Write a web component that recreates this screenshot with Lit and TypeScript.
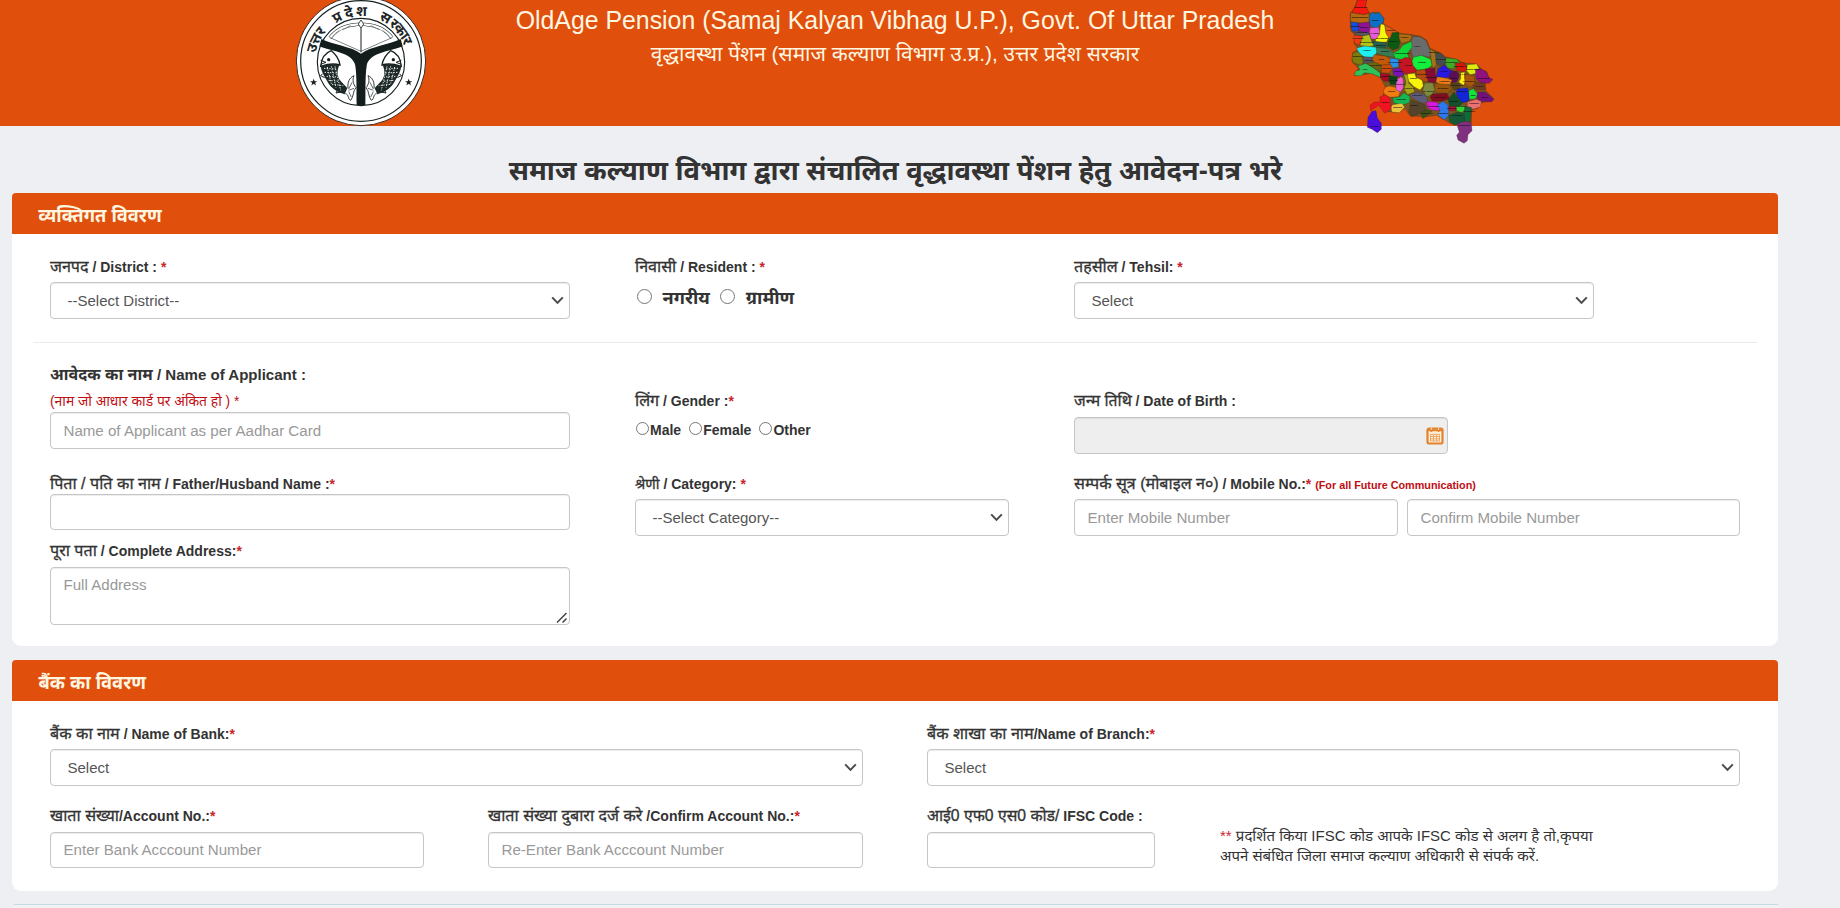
import { LitElement, html, svg, css, nothing } from "lit";
import { customElement, property } from "lit/decorators.js";

/* fill, outline points, optional name with its centre */
type District = [string, string, string?, number?, number?];

const DISTRICTS: District[] = [
  ["#f5190f", "82,0 110,0 106,18 118,38 102,44 66,38 68,30 78,18", "Saharanpur", 92, 25],
  ["#b8690f", "62,38 102,44 117,40 117,66 100,70 62,66", "Muzaffarnagar", 90, 53],
  ["#0f6fc4", "118,46 128,36 136,42 146,36 162,55 158,70 148,76 138,86 122,78 118,62", "Bijnor", 137, 62],
  ["#1450dc", "62,66 84,68 88,94 66,94", "Baghpat", 74, 80],
  ["#8c1494", "84,70 118,66 120,84 116,100 88,98", "Meerut", 101, 84],
  ["#e85bd8", "120,84 146,82 150,98 142,118 124,116 118,100", "J P Nagar", 133, 101],
  ["#f6f50c", "152,72 164,74 168,98 176,112 170,126 140,128 136,120 148,104", "Moradabad", 157, 116],
  ["#e05c10", "164,74 186,86 206,98 190,104 178,116 168,100", "Rampur", 182, 93],
  ["#5c5560", "72,92 116,98 120,108 98,108 76,106", "Ghaziabad", 94, 98],
  ["#f03c10", "72,106 98,108 92,134 76,132 72,120", "G B Nagar", 84, 118],
  ["#b4c414", "98,108 118,104 124,122 134,136 116,140 90,136", "Bulandshahr", 110, 129],
  ["#24604a", "126,122 168,128 176,140 150,146 132,140", "Sambhal", 152, 137],
  ["#0c5a14", "186,98 206,96 210,122 206,144 188,150 174,138 174,124 182,112", "Bareilly", 191, 127],
  ["#b06c10", "206,102 240,104 246,112 238,124 214,130 208,116", "Pilibhit", 223, 114],
  ["#6a6c6c", "248,110 270,110 288,122 298,146 306,162 296,172 272,166 250,174 244,156 240,134", "Kheri", 262, 142],
  ["#10d838", "244,124 246,142 232,160 236,172 222,180 194,174 188,160 208,150 218,136", "Shahjahanpur", 218, 162],
  ["#3c7c54", "134,142 176,146 190,158 194,172 166,168 140,160", "Budaun", 166, 157],
  ["#1ef0f0", "80,144 104,138 138,142 140,158 130,172 106,172 92,164 84,154", "Aligarh", 110, 152],
  ["#7c7c0c", "68,160 84,154 96,168 100,186 92,196 70,188 66,176", "Mathura", 82, 171],
  ["#545464", "98,170 130,172 134,180 124,192 102,190", "Hathras", 116, 184],
  ["#c25a08", "132,164 166,168 184,178 180,192 156,196 136,190 126,180", "Etah", 154, 180],
  ["#2cc45a", "84,198 108,190 134,206 152,220 150,232 128,222 104,218 92,228 72,226 78,212 90,210", "Agra", 104, 209],
  ["#6c6410", "108,190 134,186 154,196 152,218 136,206", "Firozabad", 136, 198],
  ["#c84e0c", "154,196 182,192 190,204 176,220 154,218", "Mainpuri", 171, 208],
  ["#2890e8", "180,174 206,178 206,200 188,204 180,190", "Farrukhabad", 194, 188],
  ["#c61422", "206,182 226,172 242,176 252,196 258,216 232,222 210,214 208,196", "Hardoi", 234, 197],
  ["#14ee3c", "250,172 274,166 302,178 306,196 290,208 262,210 250,198 246,184", "Sitapur", 276, 188],
  ["#a4721c", "300,146 316,158 322,172 318,196 308,206 304,182", "Bahraich", 312, 160],
  ["#444c4c", "316,160 334,160 346,174 350,190 330,198 318,188", "Shravasti", 333, 179],
  ["#3cae24", "348,174 382,178 388,190 370,206 352,204 346,190", "Balrampur", 365, 189],
  ["#a80c24", "150,220 178,222 184,244 162,244 152,234", "Etawah", 165, 232],
  ["#0c4418", "178,226 202,230 200,252 182,254 176,242", "Auraiya", 190, 242],
  ["#7a14b8", "188,206 210,204 222,224 208,232 190,224", "Kannauj", 205, 217],
  ["#a8a414", "222,222 234,226 236,250 250,262 254,276 232,284 222,266 228,248", "Kanpur N", 238, 266],
  ["#f8f40c", "232,222 254,220 258,232 276,238 280,258 270,270 252,260 236,244", "Unnao", 250, 238],
  ["#b44a10", "258,212 286,208 290,222 300,240 286,246 260,232", "Lucknow", 274, 224],
  ["#840c34", "286,206 314,204 318,236 316,250 296,246 288,224", "Barabanki", 303, 233],
  ["#2a18e0", "324,206 344,194 354,206 366,212 366,228 346,234 318,232", "Gonda", 342, 216],
  ["#d6180c", "374,190 402,188 412,204 404,216 382,212", "Siddharth N", 390, 202],
  ["#dcec0c", "412,194 440,192 448,206 440,220 420,224 410,212", "Maharajganj", 430, 211],
  ["#5c1054", "364,212 382,214 388,228 380,246 362,248 356,232", "Basti", 372, 236],
  ["#fcf00c", "392,218 404,216 404,236 412,240 400,256 386,246 392,236", "S K N", 398, 226],
  ["#a8540c", "404,222 432,228 436,250 420,262 404,252", "Gorakhpur", 416, 245],
  ["#90107c", "436,208 452,206 470,216 476,232 488,238 478,250 452,248 438,236", "Kushinagar", 460, 236],
  ["#703c20", "436,246 464,250 466,268 444,270 428,264", "Deoria", 448, 261],
  ["#f07c18", "322,230 346,234 366,240 360,254 330,256 318,244", "Faizabad", 343, 247],
  ["#98560c", "316,250 360,254 366,268 352,280 322,278 312,266", "Sultanpur", 339, 268],
  ["#544418", "362,248 388,250 390,268 372,270", "Ambedkar N", 379, 258],
  ["#7c8c3c", "284,250 308,248 314,268 306,284 290,290 278,272", "Rae Bareli", 293, 277],
  ["#5c5c78", "238,284 262,276 288,286 294,306 276,310 250,296", "Fatehpur", 262, 289],
  ["#820c20", "306,282 350,280 360,296 334,304 308,304 300,292", "Pratapgarh", 328, 294],
  ["#1424d8", "382,266 412,264 420,282 416,304 398,308 384,294 378,280", "Azamgarh", 396, 275],
  ["#12e43c", "416,272 430,266 444,284 436,296 418,298", "Mau", 430, 288],
  ["#74107c", "444,276 466,276 492,298 484,306 450,304 440,292", "Ballia", 464, 295],
  ["#ec7070", "412,306 438,298 454,304 452,320 430,328 412,318", "Ghazipur", 432, 313],
  ["#12502c", "354,300 372,276 384,294 398,308 386,320 360,322", "Jaunpur", 372, 306],
  ["#d818dc", "290,304 318,306 332,314 328,332 304,330 292,322", "Kaushambi", 310, 322],
  ["#2c78ec", "322,316 338,304 354,314 356,346 344,360 324,346 330,330", "Allahabad", 338, 341],
  ["#54442c", "244,300 268,308 286,314 288,330 270,340 246,350 236,336 240,316", "Banda", 252, 318],
  ["#3c5018", "272,338 290,328 306,334 290,348 278,356", "Chitrakoot", 290, 342],
  ["#a8143c", "356,320 376,318 378,332 358,332", "Bhadohi", 366, 327],
  ["#34d034", "378,320 402,316 408,328 394,338 380,332", "Varanasi", 394, 321],
  ["#0c6c3c", "404,322 424,322 420,366 404,364 402,340", "Chandauli", 418, 336],
  ["#145838", "356,346 384,336 402,340 404,368 372,376 358,364", "Mirzapur", 382, 349],
  ["#f07c10", "166,262 178,258 196,262 210,276 206,290 180,292 164,284 160,274", "Jalaun", 184, 275],
  ["#ec60d4", "202,238 212,230 220,236 220,264 212,276 198,270 198,252", "Kanpur D", 210, 256],
  ["#12b854", "188,294 210,290 222,278 240,290 238,308 214,316 192,308", "Hamirpur", 213, 300],
  ["#ecc43c", "188,314 216,310 224,322 208,338 186,336 182,322", "Mahoba", 203, 324],
  ["#f01420", "166,284 180,294 184,326 164,340 146,316 122,332 120,316 132,306 150,306 150,290", "Jhansi", 165, 308],
  ["#4c0cdc", "126,334 138,332 142,354 154,370 154,388 142,398 126,388 112,382 114,352", "Lalitpur", 134, 380],
  ["#803080", "380,372 404,364 424,368 426,392 414,404 412,422 402,430 384,420 380,406 388,396", "Sonbhadra", 402, 378],
];

@customElement("up-map")
export class UpMap extends LitElement {
  static styles = css`
    :host { display: block; width: 180px; height: 150px; }
    svg { display: block; width: 180px; height: 150px; }
    polygon { stroke: #2b2414; stroke-width: 1.2; stroke-linejoin: round; stroke-opacity: 0.65; }
    .base { fill: #7a5420; }
    text { font: 700 7px "Liberation Sans", sans-serif; fill: #0c0c10; text-anchor: middle; }
  `;
  render() {
    return html`<svg viewBox="0 0 540 450" role="img" aria-label="Uttar Pradesh districts">
      <polygon class="base" points="82,0 110,0 106,18 118,40 135,36 148,38 162,55 160,72 185,85 205,100 240,103 270,108 290,120 300,145 330,158 345,170 380,178 400,188 440,192 455,208 470,215 478,235 488,240 465,252 468,272 492,297 470,305 450,310 445,325 425,330 424,366 395,372 360,370 320,346 290,350 240,348 225,325 205,338 185,335 165,335 155,310 160,285 166,260 155,240 150,232 125,220 90,226 72,225 85,205 66,185 68,158 85,148 72,130 75,105 62,92 60,40 70,30"/>
      ${DISTRICTS.map(([fill, pts]) => svg`<polygon points=${pts} fill=${fill}></polygon>`)}
      ${DISTRICTS.map(([, , name, x, y]) => name ? svg`<text x=${x} y=${y}>${name}</text>` : nothing)}
    </svg>`;
  }
}

/* syllable and its angle round the ring, in degrees from the top */
const RING: [string, number][] = [
  ["उ", -78], ["त्त", -67], ["र", -56.5],
  ["प्र", -32], ["दे", -18], ["श", -3.5],
  ["स", 25], ["र", 36.5], ["का", 49], ["र", 61.5],
];

@customElement("state-emblem")
export class StateEmblem extends LitElement {
  static styles = css`
    :host { display: block; width: 132px; height: 132px; }
    svg { display: block; width: 132px; height: 132px; }
    .arc { font: 700 43px "Noto Sans Devanagari", "Noto Sans", sans-serif; fill: #1c2626; text-anchor: middle; }
  `;
  private fish() {
    return svg`
      <path d="M122,198 C124,176 134,158 154,151 C166,160 178,178 180,194 C168,190 146,190 122,198Z" fill="#fff" stroke="#16201f" stroke-width="4"/>
      <path d="M122,180 L138,186 L122,192" fill="none" stroke="#16201f" stroke-width="3"/>
      <circle cx="146" cy="178" r="5" fill="#16201f"/>
      <path d="M122,198 C146,190 168,190 178,195 C170,212 172,228 180,240 C188,250 198,258 202,264 L194,282 C170,276 150,262 140,240 C130,224 124,212 122,198Z" fill="#1d2927"/>
      <path d="M132,204 L172,206 M134,216 L170,218 M140,228 L172,230 M146,240 L178,243 M156,252 L190,256 M142,200 L154,250 M154,198 L168,262 M165,198 L182,270" stroke="#f4f6f5" stroke-width="2.8" stroke-dasharray="4 4" fill="none"/>
      <path d="M204,264 C202,246 208,232 222,226 C216,240 220,252 228,262 C218,272 222,288 212,300 C202,296 208,282 196,280" fill="#fff" stroke="#16201f" stroke-width="2.6"/>
      <path d="M206,266 L216,246 M206,270 L222,264 M206,274 L214,290" stroke="#16201f" stroke-width="2"/>
      <path d="M176,262 L168,278 L186,274 M128,220 L122,226 L134,232" stroke="#16201f" stroke-width="3" fill="none"/>`;
  }
  private star(x: number) {
    return svg`<path transform="translate(${x},246)" d="M0,-11 L3,-3.5 L11,-3.5 L4.5,1.5 L7,9.5 L0,4.6 L-7,9.5 L-4.5,1.5 L-11,-3.5 L-3,-3.5Z" fill="#16201f"/>`;
  }
  render() {
    return html`<svg viewBox="45 -16 396 396" role="img" aria-label="उत्तर प्रदेश सरकार">
      <circle cx="243" cy="182" r="194" fill="#fff" stroke="#3a2a22" stroke-width="3"/>
      <circle cx="243" cy="182" r="181" fill="none" stroke="#16201f" stroke-width="3.6"/>
      <circle cx="243" cy="185" r="131" fill="#fff" stroke="#16201f" stroke-width="3.4"/>
      ${RING.map(([s, a]) => svg`<text class="arc" transform="rotate(${a + 4},243,185)" x="243" y="47">${s}</text>`)}
      <path d="M124,116 C160,134 214,138 243,160 C272,138 326,134 362,116 L368,138 C340,152 268,154 260,196 C255,230 257,276 256,314 L230,314 C229,276 231,230 226,196 C218,154 146,152 118,138Z" fill="#121d1c"/>
      <path d="M150,112 C168,88 200,74 232,72 L254,72 C286,74 318,88 336,112" fill="none" stroke="#16201f" stroke-width="10"/>
      <path d="M150,112 C168,88 200,74 232,72 L254,72 C286,74 318,88 336,112" fill="none" stroke="#fff" stroke-width="7"/>
      <path d="M158,108 L178,90 M188,88 L212,76 M272,76 L298,88 M308,90 L328,108" stroke="#7b8785" stroke-width="3"/>
      <path d="M150,112 L243,153 L336,112" fill="none" stroke="#3c4645" stroke-width="2"/>
      <path d="M243,84 V156" stroke="#16201f" stroke-width="3"/>
      <path d="M243,59 L251,71 L243,84 L235,71Z" fill="#fff" stroke="#16201f" stroke-width="2.4"/>
      ${this.fish()}
      <g transform="translate(486,0) scale(-1,1)">${this.fish()}</g>
      ${this.star(101)}${this.star(386)}
    </svg>`;
  }
}

@customElement("select-box")
export class SelectBox extends LitElement {
  @property() value = "";
  static styles = css`
    :host { display: flex; align-items: center; justify-content: space-between; box-sizing: border-box; height: 37px;
      padding: 0 5px 0 16.5px; border: 1px solid #c6c6c6; border-radius: 4px; background: #fff;
      box-shadow: inset 0 1px 1px rgba(0, 0, 0, 0.075); font-size: 15px; color: #555; }
    svg { width: 13px; height: 9px; }
  `;
  render() {
    return html`<span>${this.value}</span>
      <svg viewBox="0 0 13 9"><path d="M1.2 1.4 L6.5 6.9 L11.8 1.4" fill="none" stroke="#4a4a4a" stroke-width="2"/></svg>`;
  }
}

@customElement("app-root")
export class AppRoot extends LitElement {
  static styles = css`
    :host { display: block; height: 908px; overflow: hidden; background: #eeeff2; color: #333;
      font-family: "Liberation Sans", "Noto Sans Devanagari", "Noto Sans", sans-serif; }
    * { box-sizing: border-box; }
    .top { display: grid; grid-template-columns: 295px 132px 1fr 510px; height: 126px; background: #e04f0c; color: #fff6e0; }
    .logo { grid-column: 2; margin-top: -5px; }
    .titles { text-align: center; padding-top: 4px; margin-left: 8px; margin-right: -25px; white-space: nowrap; }
    .en { font-size: 24.85px; line-height: 34px; }
    .sub { font-size: 20.85px; line-height: 32px; }
    .map { z-index: 1; }
    .heading { margin: 0; padding-top: 27px; height: 67px; width: 1791px; text-align: center; font-size: 27.35px; line-height: 36px; font-weight: 700; color: #333; }
    .panel { width: 1766px; margin-left: 12px; background: #fff; border-radius: 5px 5px 9px 9px; }
    .personal { height: 453px; margin-bottom: 14px; }
    .bank { height: 231px; margin-bottom: 13px; }
    .bar { height: 41px; border-radius: 4px 4px 0 0; background: #e04f0c; color: #fff6e0; padding-left: 26.5px;
      font-size: 18.3px; line-height: 45px; font-weight: 700; }
    .grid { display: grid; grid-template-columns: 585px 439px 666px; padding-left: 38px; }
    .first { padding-top: 23px; height: 108px; }
    .rule { height: 1px; margin: 0 21px; background: #ebebeb; }
    .label { height: 20px; line-height: 20px; font-size: 14px; font-weight: 700; white-space: pre; color: #333; }
    .h { font-weight: 400; font-size: 16.1px; line-height: 0; -webkit-text-stroke: 0.3px #333; }
    .h156 { font-size: 15.75px; }
    .h145 { font-size: 14.5px; }
    .star { color: #c9252b; }
    .info .star { letter-spacing: 0; }
    .note12 { color: #c00d12; font-size: 10.8px; }
    .big { font-size: 15.05px; }
    .big .h { font-weight: 700; font-size: 16.1px; -webkit-text-stroke: 0; }
    .red { font-size: 13.85px; font-weight: 400; color: #c00d12; margin-top: 6px; height: 20px; line-height: 20px; white-space: pre; }
    .control { display: block; width: 100%; height: 37px; padding: 0 12px 0 12.5px; border: 1px solid #c6c6c6; border-radius: 4px;
      background: #fff; box-shadow: inset 0 1px 1px rgba(0, 0, 0, 0.075); font: 15.1px "Liberation Sans", sans-serif; color: #555; outline: 0; }
    .control::placeholder { color: #999; opacity: 1; }
    .h36 { height: 36px; padding-bottom: 1.5px; }
    .area { display: grid; margin-top: 6px; }
    .area > * { grid-area: 1 / 1; }
    textarea.control { height: 58px; padding-top: 8px; resize: none; }
    .grip { width: 12px; height: 12px; place-self: end; margin: 0 2px 2px 0; }
    .name { margin-top: 1px; }
    .father { margin-top: 25px; }
    .address { margin-top: 11px; }
    .category { margin-top: 34px; }
    .mobile { margin-top: 20px; }
    .w520 { width: 520px; }
    .w374 { width: 374px; }
    .g5 { margin-top: 5px; }
    .g6 { margin-top: 6px; }
    .radios { display: flex; align-items: center; font-weight: 700; }
    .radios input { margin: 0; flex: none; }
    .res { height: 30px; margin-top: 5px; padding-left: 2px; font-size: 18.2px; }
    .res input { width: 15px; height: 15px; margin-top: -1px; }
    .res span { margin: 5px 10.5px 0 10.5px; }
    .gender { height: 20px; margin-top: 9px; padding-left: 1px; font-size: 14px; }
    .gender input { width: 13px; height: 13px; margin-top: -4px; }
    .gender span { margin-right: 8px; margin-left: 1px; }
    .dob { display: flex; align-items: center; justify-content: flex-end; background: #eee; padding: 0 3px 0 12px; margin-top: 6px; }
    .cal { width: 18px; height: 18px; }
    .pair { display: grid; grid-template-columns: 324px 333px; gap: 9px; margin-top: 5px; }
    .colA { padding-top: 22px; }
    .colB { padding-top: 48px; }
    .banks { display: grid; grid-template-columns: 813px 813px; gap: 64px; padding: 23px 38px 0; }
    .accounts { display: grid; grid-template-columns: 374px 375px 228px 400px; column-gap: 64px; padding: 20px 38px 0; }
    .info { font-size: 15px; line-height: 20px; padding: 20px 0 0 1px; white-space: pre; color: #333; }
    .next { width: 1764px; height: 4px; margin-left: 14px; background: #f1f2f3; border-top: 1px solid #c3dbe9; }
  `;
  render() {
    const star = html`<span class="star">*</span>`;
    return html`
      <header class="top">
        <state-emblem class="logo"></state-emblem>
        <div class="titles">
          <div class="en">OldAge Pension (Samaj Kalyan Vibhag U.P.), Govt. Of Uttar Pradesh</div>
          <div class="sub">वृद्धावस्था पेंशन (समाज कल्याण विभाग उ.प्र.), उत्तर प्रदेश सरकार</div>
        </div>
        <up-map class="map"></up-map>
      </header>
      <h1 class="heading">समाज कल्याण विभाग द्वारा संचालित वृद्धावस्था पेंशन हेतु आवेदन-पत्र भरे</h1>

      <section class="panel personal">
        <div class="bar">व्यक्तिगत विवरण</div>
        <div class="grid first">
          <div class="w520">
            <div class="label"><span class="h">जनपद</span> / District : ${star}</div>
            <select-box class="g5" value="--Select District--"></select-box>
          </div>
          <div>
            <div class="label"><span class="h">निवासी</span> / Resident : ${star}</div>
            <div class="radios res">
              <input type="radio" name="res" /><span>नगरीय</span><input type="radio" name="res" /><span>ग्रामीण</span>
            </div>
          </div>
          <div class="w520">
            <div class="label"><span class="h">तहसील</span> / Tehsil: ${star}</div>
            <select-box class="g5" value="Select"></select-box>
          </div>
        </div>
        <div class="rule"></div>
        <div class="grid">
          <div class="colA w520">
            <div class="label big"><span class="h">आवेदक का नाम</span> / Name of Applicant :</div>
            <div class="red">(नाम जो आधार कार्ड पर अंकित हो ) *</div>
            <input class="control name" placeholder="Name of Applicant as per Aadhar Card" />
            <div class="label father"><span class="h">पिता / पति का नाम</span> / Father/Husband Name :${star}</div>
            <input class="control h36" />
            <div class="label address"><span class="h">पूरा पता</span> / Complete Address:${star}</div>
            <div class="area">
              <textarea class="control" placeholder="Full Address"></textarea>
              <svg class="grip" viewBox="0 0 12 12"><path d="M1 11.5 L10.5 2 M6.5 11.5 L10.5 7.5" stroke="#444" stroke-width="1.5" fill="none"/></svg>
            </div>
          </div>
          <div class="colB w374">
            <div class="label"><span class="h">लिंग</span> / Gender :${star}</div>
            <div class="radios gender">
              <input type="radio" name="g" /><span>Male</span><input type="radio" name="g" /><span>Female</span><input type="radio" name="g" /><span>Other</span>
            </div>
            <div class="label category"><span class="h h145">श्रेणी</span> / Category: ${star}</div>
            <select-box class="g5" value="--Select Category--"></select-box>
          </div>
          <div class="colB">
            <div class="label"><span class="h h156">जन्म तिथि</span> / Date of Birth :</div>
            <div class="control dob w374">
              <svg class="cal" viewBox="0 0 18 18">
                <rect x="1.5" y="1.5" width="15" height="15" rx="1.8" fill="#fdf0dc" stroke="#e5822c" stroke-width="2.2"/>
                <path d="M2 3.2 H16" stroke="#e5822c" stroke-width="2"/>
                <path d="M5.4 2 V5 M12.6 2 V5" stroke="#e5822c" stroke-width="1.8"/>
                <path d="M5.4 0.8 V2.6 M12.6 0.8 V2.6" stroke="#fdf0dc" stroke-width="1"/>
                <path d="M4.5 7.3 H13.5 V14 H4.5Z M4.5 9.5 H13.5 M4.5 11.8 H13.5 M7.5 7.3 V14 M10.5 7.3 V14" fill="none" stroke="#eba766" stroke-width="1"/>
              </svg>
            </div>
            <div class="label mobile"><span class="h">सम्पर्क सूत्र (मोबाइल न०)</span> / Mobile No.:${star} <span class="note12">(For all Future Communication)</span></div>
            <div class="pair">
              <input class="control" placeholder="Enter Mobile Number" />
              <input class="control" placeholder="Confirm Mobile Number" />
            </div>
          </div>
        </div>
      </section>

      <section class="panel bank">
        <div class="bar">बैंक का विवरण</div>
        <div class="banks">
          <div>
            <div class="label"><span class="h">बैंक का नाम</span> / Name of Bank:${star}</div>
            <select-box class="g5" value="Select"></select-box>
          </div>
          <div>
            <div class="label"><span class="h">बैंक शाखा का नाम</span>/Name of Branch:${star}</div>
            <select-box class="g5" value="Select"></select-box>
          </div>
        </div>
        <div class="accounts">
          <div>
            <div class="label"><span class="h">खाता संख्या</span>/Account No.:${star}</div>
            <input class="control h36 g6" placeholder="Enter Bank Acccount Number" />
          </div>
          <div>
            <div class="label"><span class="h">खाता संख्या दुबारा दर्ज करे</span> /Confirm Account No.:${star}</div>
            <input class="control h36 g6" placeholder="Re-Enter Bank Acccount Number" />
          </div>
          <div>
            <div class="label"><span class="h h156">आई0 एफ0 एस0 कोड/</span> IFSC Code :</div>
            <input class="control h36 g6" />
          </div>
          <div class="info"><span class="star">**</span> प्रदर्शित किया IFSC कोड आपके IFSC कोड से अलग है तो,कृपया
अपने संबंधित जिला समाज कल्याण अधिकारी से संपर्क करें.</div>
        </div>
      </section>
      <div class="next"></div>
    `;
  }
}
